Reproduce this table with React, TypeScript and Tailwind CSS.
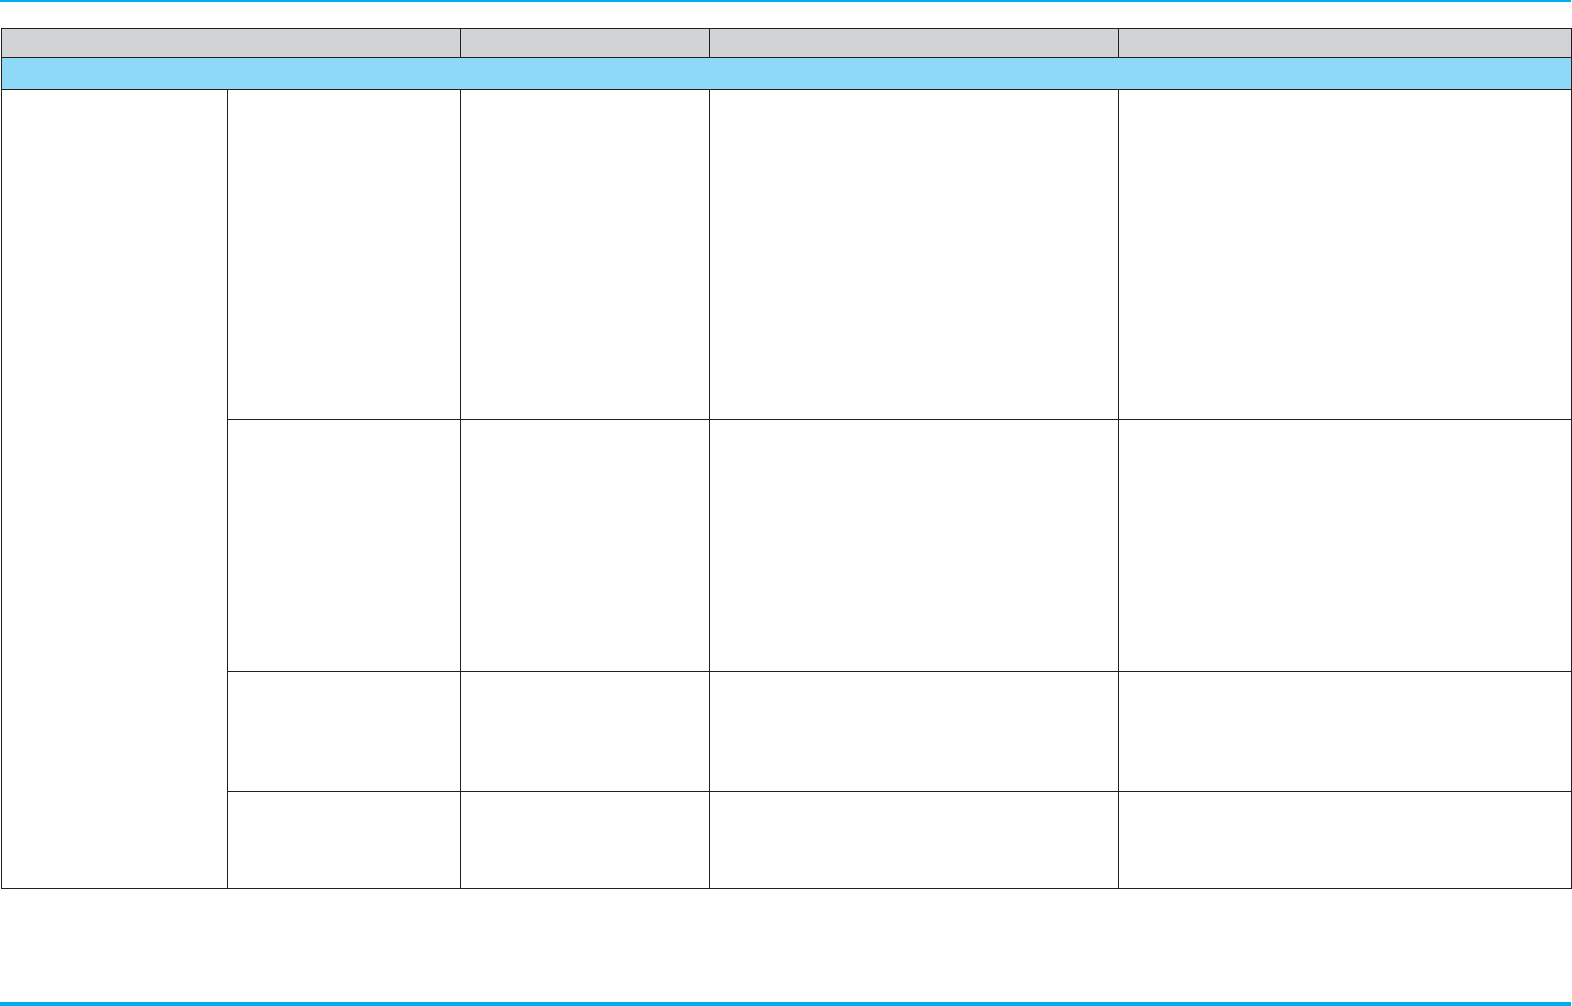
import React from "react";

export default function App() {
  const cell = "border border-[#231f20] p-0 align-top";
  return (
    <div className="flex h-[1006px] w-[1572px] flex-col bg-white" style={{ fontFamily: '"Liberation Sans", Arial, sans-serif' }}>
      <div className="h-[2px] w-[1571px] bg-[#00aeef]" />
      <table className="ml-px mt-[26px] w-[1570px] table-fixed border-collapse">
        <colgroup>
          <col className="w-[226px]" />
          <col className="w-[233px]" />
          <col className="w-[249px]" />
          <col className="w-[409px]" />
          <col className="w-[453px]" />
        </colgroup>
        <thead>
          <tr className="h-[29px] bg-[#d1d3d4]">
            <th colSpan={2} className={cell}></th>
            <th className={cell}></th>
            <th className={cell}></th>
            <th className={cell}></th>
          </tr>
        </thead>
        <tbody>
          <tr className="h-[32px] bg-[#8ed8f8]">
            <td colSpan={5} className={cell}></td>
          </tr>
          <tr className="h-[330px]">
            <td rowSpan={4} className={cell}></td>
            <td className={cell}></td>
            <td className={cell}></td>
            <td className={cell}></td>
            <td className={cell}></td>
          </tr>
          <tr className="h-[252px]">
            <td className={cell}></td>
            <td className={cell}></td>
            <td className={cell}></td>
            <td className={cell}></td>
          </tr>
          <tr className="h-[120px]">
            <td className={cell}></td>
            <td className={cell}></td>
            <td className={cell}></td>
            <td className={cell}></td>
          </tr>
          <tr className="h-[97px]">
            <td className={cell}></td>
            <td className={cell}></td>
            <td className={cell}></td>
            <td className={cell}></td>
          </tr>
        </tbody>
      </table>
      <div className="mt-auto h-[4px] w-[1571px] bg-[#00aeef]" />
    </div>
  );
}
